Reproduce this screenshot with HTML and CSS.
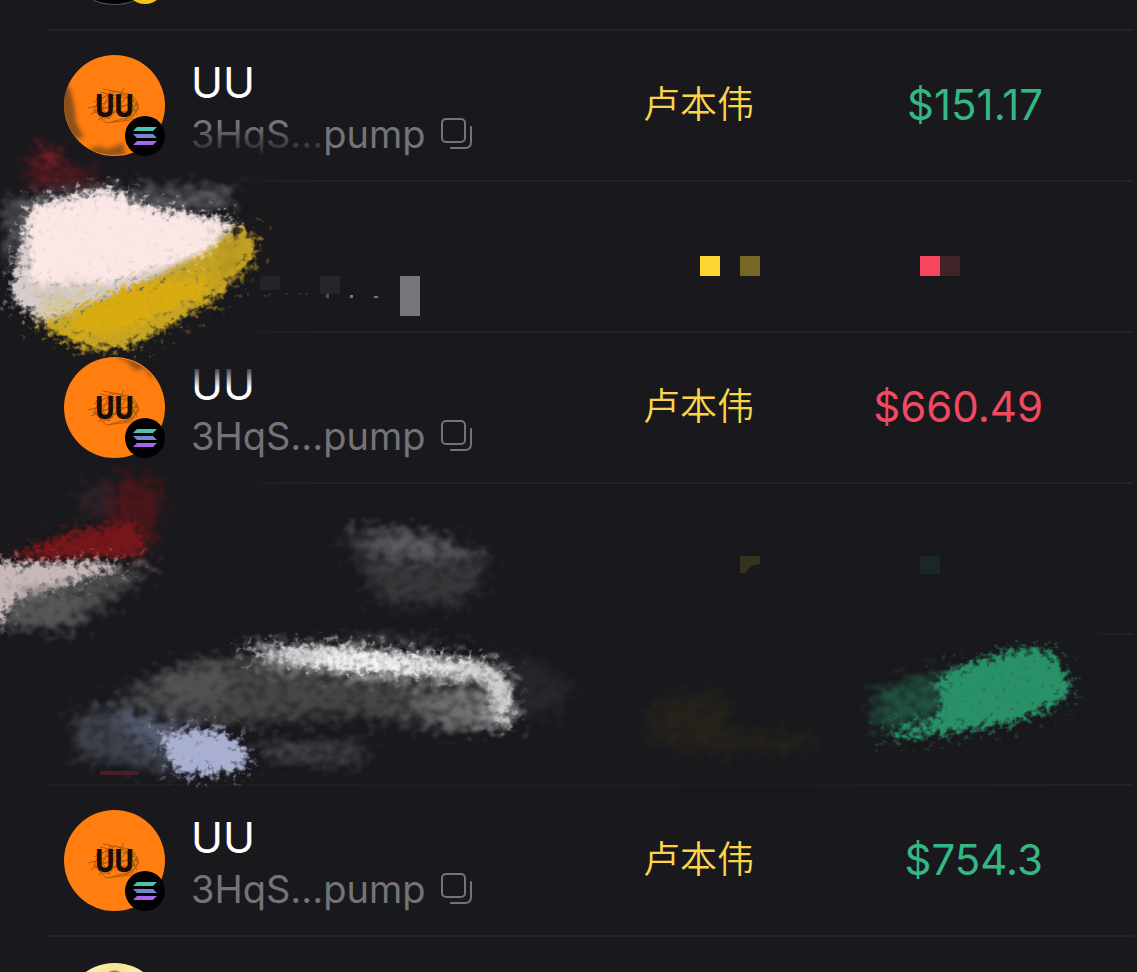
FILE: index.html
```
<!DOCTYPE html>
<html lang="zh-CN">
<head>
    <meta charset="UTF-8">
    <meta name="viewport" content="width=device-width, initial-scale=1.0">
    <title>UU</title>
    <link rel="stylesheet" href="styles.css">
</head>
<body>
    <svg class="defs" width="0" height="0" aria-hidden="true">
        <symbol id="scribble" viewBox="0 0 100 100">
            <path d="M23 52l12-3 24-11M28 55l20-5 26-1M31 42l13 21 18-23 10 19M34 60l12-26M39 63l20-31M29 46l22-11 18 9M35 36l30 7M33 64l36-19M26 58l17-7M38 33l26 5 10 14-9 12-24 3-12-13 7-15M35 58l36-4M46 66l19-5 7-15M42 39c-13 8-12 20 2 24M65 38c12 8 9 21-6 26"/>
        </symbol>
        <symbol id="solana" viewBox="0 0 40 40">
            <path d="M12 11h20l-4 4H8z" fill="#49c5ad"/>
            <path d="M8 18h20l4 4H12z" fill="#7585d0"/>
            <path d="M12 25h20l-4 4H8z" fill="#a568e6"/>
        </symbol>
        <symbol id="copy" viewBox="0 0 32 32">
            <rect x="1" y="1" width="23" height="23" rx="4"/>
            <path d="M30 9v15q0 6-6 6H10"/>
        </symbol>
    </svg>

    <main class="board">
        <ul class="trades">
            <li class="trade">
                <div class="avatar avatar-dark"><span class="chain chain-yellow"></span></div>
            </li>
            <li class="trade fade-short">
                <div class="avatar">
                    <svg class="scribble"><use href="#scribble"/></svg>
                    <span class="logo-text">UU</span>
                    <span class="chain"><svg><use href="#solana"/></svg></span>
                </div>
                <div class="token">
                    <h2>UU</h2>
                    <p>3HqS...pump <button type="button" aria-label="Copy"><svg><use href="#copy"/></svg></button></p>
                </div>
                <span class="trader">卢本伟</span>
                <span class="amount up">$151.17</span>
            </li>
            <li class="trade fade-short"></li>
            <li class="trade fade-short">
                <div class="avatar">
                    <svg class="scribble"><use href="#scribble"/></svg>
                    <span class="logo-text">UU</span>
                    <span class="chain"><svg><use href="#solana"/></svg></span>
                </div>
                <div class="token">
                    <h2>UU</h2>
                    <p>3HqS...pump <button type="button" aria-label="Copy"><svg><use href="#copy"/></svg></button></p>
                </div>
                <span class="trader">卢本伟</span>
                <span class="amount down">$660.49</span>
            </li>
            <li class="trade fade-long"></li>
            <li class="trade fade-soft"></li>
            <li class="trade">
                <div class="avatar">
                    <svg class="scribble"><use href="#scribble"/></svg>
                    <span class="logo-text">UU</span>
                    <span class="chain"><svg><use href="#solana"/></svg></span>
                </div>
                <div class="token">
                    <h2>UU</h2>
                    <p>3HqS...pump <button type="button" aria-label="Copy"><svg><use href="#copy"/></svg></button></p>
                </div>
                <span class="trader">卢本伟</span>
                <span class="amount up">$754.3</span>
            </li>
            <li class="trade">
                <div class="avatar avatar-cream"></div>
            </li>
        </ul>

        <!-- brush marks over the left half -->
        <svg class="paint paint-left" width="620" height="972" viewBox="0 0 620 972" aria-hidden="true">
            <defs>
                <filter id="rough" x="-20%" y="-30%" width="140%" height="160%" color-interpolation-filters="sRGB">
                    <feTurbulence type="fractalNoise" baseFrequency="0.15 0.17" numOctaves="3" seed="4"/>
                    <feColorMatrix values="0 0 0 0 0  0 0 0 0 0  0 0 0 0 0  2 0 0 0 -0.5" result="noise"/>
                    <feGaussianBlur in="SourceAlpha" stdDeviation="7" result="soft"/>
                    <feComposite in="soft" in2="noise" operator="arithmetic" k2="0.6" k3="0.4"/>
                    <feComponentTransfer result="mask"><feFuncA type="linear" slope="3" intercept="-0.95"/></feComponentTransfer>
                    <feMorphology in="SourceGraphic" operator="dilate" radius="14"/>
                    <feComposite in2="mask" operator="in"/>
                    <feGaussianBlur stdDeviation="0.7"/>
                </filter>
                <filter id="dry" x="-20%" y="-40%" width="140%" height="180%" color-interpolation-filters="sRGB">
                    <feTurbulence type="fractalNoise" baseFrequency="0.09 0.12" numOctaves="4" seed="9"/>
                    <feColorMatrix values="0 0 0 0 0  0 0 0 0 0  0 0 0 0 0  2 0 0 0 -0.5" result="noise"/>
                    <feGaussianBlur in="SourceAlpha" stdDeviation="8" result="soft"/>
                    <feComposite in="soft" in2="noise" operator="arithmetic" k2="0.6" k3="0.4"/>
                    <feComponentTransfer result="mask"><feFuncA type="linear" slope="1.8" intercept="-0.5"/></feComponentTransfer>
                    <feMorphology in="SourceGraphic" operator="dilate" radius="14"/>
                    <feComposite in2="mask" operator="in"/>
                    <feGaussianBlur stdDeviation="0.8"/>
                </filter>
                <filter id="stain" x="-50%" y="-50%" width="200%" height="200%">
                    <feGaussianBlur stdDeviation="2"/>
                </filter>
                <clipPath id="coin-top"><circle cx="114" cy="105" r="50"/></clipPath>
                <clipPath id="coin-mid"><circle cx="114" cy="408" r="50"/></clipPath>
                <linearGradient id="fade-down" x1="0" y1="0" x2="0" y2="1">
                    <stop offset="0" stop-color="#19191d" stop-opacity="0"/>
                    <stop offset="1" stop-color="#19191d" stop-opacity="0.95"/>
                </linearGradient>
                <linearGradient id="fade-up" x1="0" y1="0" x2="0" y2="1">
                    <stop offset="0" stop-color="#19191d" stop-opacity="0.8"/>
                    <stop offset="1" stop-color="#19191d" stop-opacity="0"/>
                </linearGradient>
            </defs>

            <!-- wiped text -->
            <rect x="186" y="126" width="140" height="30" fill="url(#fade-down)"/>
            <rect x="186" y="363" width="72" height="6" fill="#19191d"/>
            <rect x="186" y="369" width="72" height="19" fill="url(#fade-up)"/>

            <g clip-path="url(#coin-top)" fill="#71451b">
                <path d="M62 83L70 88L74 105L76 122L84 138L72 138L60 110Z" filter="url(#stain)" opacity="0.8"/>
                <path d="M86 150L98 146L108 149L123 143L126 156L100 158Z" filter="url(#stain)" opacity="0.7"/>
            </g>
            <g clip-path="url(#coin-mid)" fill="#71451b">
                <path d="M112 355L126 361L136 371L144 368L152 378L160 372L140 352Z" filter="url(#stain)" opacity="0.7"/>
            </g>

            <!-- upper left -->
            <path d="M30 147L55 147L75 168L112 175L80 194L24 190Z" fill="#611820" opacity="0.7" filter="url(#dry)"/>
            <path d="M36 148L55 151L62 172L42 165Z" fill="#85212b" filter="url(#dry)"/>
            <path d="M5 200L85 187L235 186L228 210L70 215L30 270L6 260Z" fill="#56565b" filter="url(#dry)"/>
            <path d="M30 205L110 188L145 206L235 220L225 255L120 300L48 325L10 298Z" fill="#d6cccb" filter="url(#rough)"/>
            <path d="M238 230L258 236L252 260L210 302L130 347L90 350L34 325L140 286Z" fill="#c5a323" filter="url(#rough)"/>
            <path d="M31 210L112 193L145 212L230 223L208 250L115 282L31 286Z" fill="#fae7e6" filter="url(#rough)"/>
            <path d="M30 284L110 286L75 302L40 302Z" fill="#c9c0b3" opacity="0.6" filter="url(#dry)"/>
            <path d="M36 298L75 296L110 290L70 318L42 322Z" fill="#d9c67a" opacity="0.6" filter="url(#dry)"/>
            <path d="M135 286L220 276L200 296L125 331L65 335L80 312Z" fill="#d8ab10" filter="url(#rough)"/>
            <path d="M215 232L246 240L240 270L212 285L222 255Z" fill="#a88c1c" opacity="0.6" filter="url(#dry)"/>

            <!-- leftovers of the erased row -->
            <g fill="#77767b">
                <rect x="400" y="276" width="20" height="40"/>
                <rect x="260" y="276" width="20" height="14" opacity="0.12"/>
                <rect x="320" y="276" width="20" height="18" opacity="0.14"/>
                <rect x="326" y="294" width="3" height="4" opacity="0.6"/>
                <rect x="350" y="295" width="3" height="3"/>
                <rect x="374" y="296" width="4" height="2"/>
                <path d="M248 292v4m16-1q4 3 7-2m14 1h3m10 0h3m4 0h3" fill="none" stroke="#77767b" stroke-width="2" opacity="0.2"/>
            </g>

            <!-- middle left -->
            <path d="M72 515L88 482L118 480L122 522Z" fill="#4c2f36" opacity="0.4" filter="url(#dry)"/>
            <path d="M111 482L145 474L162 486L155 548L105 542Z" fill="#5c1518" opacity="0.75" filter="url(#dry)"/>
            <path d="M12 554L72 533L135 521L148 556L12 561Z" fill="#76161a" filter="url(#rough)"/>
            <path d="M-4 572L155 564L125 590L75 628L0 631Z" fill="#4d4d4f" filter="url(#dry)"/>
            <path d="M-20 564L135 562L90 576L8 604L2 624L-20 626Z" fill="#c8b7b8" filter="url(#rough)"/>
            <path d="M70 562L152 563L140 568L80 570Z" fill="#c8b7b8" opacity="0.6" filter="url(#dry)"/>
            <path d="M14 593L60 589L100 592L65 625L19 624Z" fill="#5a595b" opacity="0.8" filter="url(#dry)"/>

            <!-- gray strokes -->
            <path d="M340 528L420 531L490 553L480 587L452 608L378 601Z" fill="#3d3d40" opacity="0.85" filter="url(#dry)"/>
            <path d="M355 530L415 532L480 554L440 560L385 558Z" fill="#5a595d" filter="url(#dry)"/>
            <path d="M350 634L420 637L462 648H340Z" fill="#454548" filter="url(#dry)"/>
            <path d="M480 652L535 660L575 686L555 715L500 722Z" fill="#2b2b2f" opacity="0.8" filter="url(#dry)"/>
            <path d="M105 703L168 668L270 649L500 662L515 722L450 730L350 717L240 724L185 724Z" fill="#464648" filter="url(#dry)"/>
            <path d="M150 682L205 660L235 672L225 700L180 710Z" fill="#58585a" opacity="0.7" filter="url(#dry)"/>
            <path d="M236 650L320 645L488 662L512 677L514 724L480 726L490 684L360 676L280 668Z" fill="#a5a5a7" filter="url(#dry)"/>
            <path d="M238 650L330 646L485 663L506 677L511 720L496 722L489 678L350 670L290 661Z" fill="#cfcfd1" filter="url(#rough)"/>
            <path d="M300 656L345 655L420 663L475 671L345 667Z" fill="#f5f5f5" filter="url(#rough)"/>
            <path d="M405 700L490 688L500 728L450 731Z" fill="#8a8a8c" opacity="0.6" filter="url(#dry)"/>
            <path d="M260 739L368 744L366 762L315 765L260 759Z" fill="#414144" filter="url(#dry)"/>

            <!-- blue patch -->
            <path d="M72 716L118 704L205 728L240 755L165 772L77 757Z" fill="#454954" opacity="0.85" filter="url(#dry)"/>
            <path d="M105 712L160 722L195 734L150 750L120 724Z" fill="#69728e" opacity="0.6" filter="url(#dry)"/>
            <rect x="100" y="771" width="38" height="4" fill="#6b2027" opacity="0.6"/>
            <path d="M162 733L218 730L249 750L241 771L178 775L169 760Z" fill="#a9afd1" filter="url(#rough)"/>
        </svg>

        <!-- brush marks over the right half -->
        <svg class="paint paint-right" width="517" height="972" viewBox="620 0 517 972" aria-hidden="true">
            <rect x="700" y="256" width="20" height="20" fill="#fed533"/>
            <rect x="740" y="256" width="20" height="20" fill="#756726"/>
            <rect x="920" y="256" width="20" height="20" fill="#f6465d"/>
            <rect x="940" y="256" width="20" height="20" fill="#402326"/>
            <path d="M740 556h20v8l-9 2-6 7h-5z" fill="#35321f"/>
            <rect x="920" y="556" width="20" height="18" fill="#192827"/>
            <path d="M650 698L730 690L728 730L825 735L810 750L700 754L645 740Z" fill="#25221b" filter="url(#dry)"/>
            <path d="M875 692L940 670L950 715L875 733Z" fill="#20513f" filter="url(#dry)"/>
            <path d="M939 674L1018 649L1053 652L1071 689L1064 700L1010 723L930 735L880 739L893 729L942 719Z" fill="#299168" filter="url(#rough)"/>
        </svg>
    </main>
</body>
</html>
```

FILE: styles.css
```
:root {
    --bg-color: #19191d;
    --line-color: #242428;
    --text-color: #ffffff;
    --muted-color: #747378;
    --trader-color: #fbd44a;
    --up-color: #34b784;
    --down-color: #f14a60;
}

* {
    margin: 0;
    padding: 0;
    box-sizing: border-box;
}

html {
    background-color: var(--bg-color);
}

body {
    font-family: Inter, 'Noto Sans CJK SC', sans-serif;
    color: var(--text-color);
    height: 100vh;
    overflow: hidden;
}

.defs {
    position: absolute;
}

.board {
    position: relative;
    height: 100%;
    overflow: hidden;
}

/* the list is scrolled part way into its first row */
.trades {
    list-style: none;
    margin: -120px 4px 0 48px;
}

.trade {
    display: grid;
    grid-template-columns: 100px 1fr 200px 200px;
    align-items: start;
    height: 151px;
    padding: 24px 90px 0 16px;
    border-bottom: 2px solid var(--line-color);
}

.fade-short {
    border-image: linear-gradient(to right, transparent 180px, var(--line-color) 280px) 1;
}

.fade-long {
    border-image: linear-gradient(to right, transparent 95%, var(--line-color)) 1;
}

.fade-soft {
    border-image: linear-gradient(to right, #1e1e22, #1c1c20 70%, var(--line-color)) 1;
}

.avatar {
    position: relative;
    width: 101px;
    height: 101px;
    border-radius: 50%;
    background-color: #ff7e0f;
    display: flex;
    align-items: center;
    justify-content: center;
}

.avatar-dark {
    background-color: #020204;
    border-bottom: 1px solid #555555;
}

.avatar-cream {
    margin-top: 2px;
    background: radial-gradient(circle at 50% 18px, #a77b3c 10px, #f4e28e 11px, #f8eda8 20px);
}

.scribble {
    position: absolute;
    width: 100px;
    height: 100px;
    fill: none;
    stroke: #5c340f;
    stroke-width: 1;
    opacity: 0.5;
}

.logo-text {
    position: relative;
    font-family: 'DejaVu Sans Mono', monospace;
    font-size: 32px;
    font-weight: 700;
    line-height: 32px;
    color: #180d08;
}

.chain {
    position: absolute;
    right: 0;
    bottom: 0;
    width: 40px;
    height: 40px;
    border-radius: 50%;
    background-color: #020204;
}

.chain-yellow {
    background-color: #f3c51c;
}

.chain svg {
    display: block;
    width: 40px;
    height: 40px;
}

.token {
    padding-left: 27px;
}

.token h2 {
    font-size: 43px;
    font-weight: 400;
    line-height: 54px;
}

.token p {
    display: flex;
    align-items: center;
    gap: 15px;
    font-size: 38px;
    line-height: 50px;
    color: var(--muted-color);
    white-space: nowrap;
}

.token button {
    width: 32px;
    height: 32px;
    border: none;
    background: none;
    color: inherit;
    cursor: pointer;
}

.token button svg {
    display: block;
    width: 32px;
    height: 32px;
    fill: none;
    stroke: currentColor;
    stroke-width: 2;
    stroke-linecap: round;
}

.trader {
    font-family: 'Noto Sans CJK SC', sans-serif;
    font-size: 37px;
    font-weight: 350;
    line-height: 94px;
    color: var(--trader-color);
}

.amount {
    font-size: 42px;
    line-height: 100px;
    text-align: right;
}

.up {
    color: var(--up-color);
}

.down {
    color: var(--down-color);
}

.paint {
    position: absolute;
    top: 0;
    pointer-events: none;
}

.paint-left {
    left: 0;
}

.paint-right {
    right: 0;
}
```
